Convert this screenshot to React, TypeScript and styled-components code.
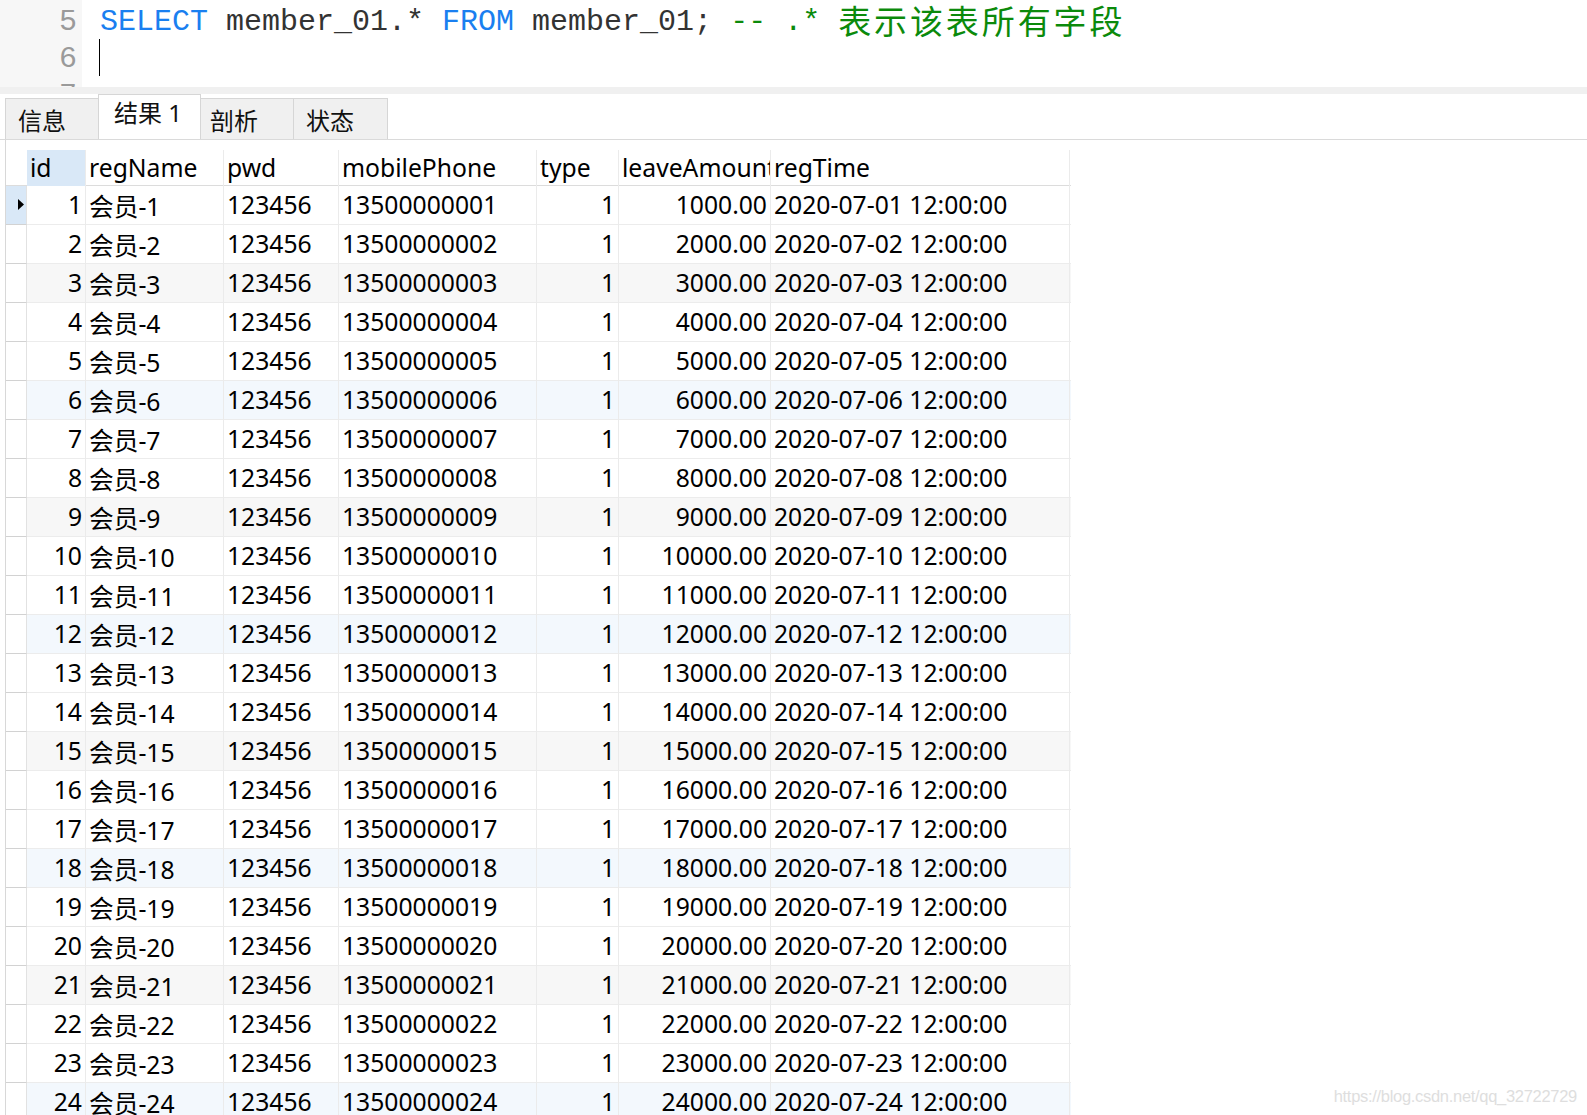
import React from "react";
import styled, { createGlobalStyle } from "styled-components";

const Global = createGlobalStyle`
  html, body { margin: 0; padding: 0; background: #ffffff; }
  body { font-family: "Noto Sans", "Noto Sans CJK SC", sans-serif; }
`;

const Page = styled.div`
  position: relative;
  width: 1587px;
  height: 1115px;
  overflow: hidden;
  background: #ffffff;
  display: flex;
  flex-direction: column;
`;

const Editor = styled.div`
  display: flex;
  height: 87px;
  overflow: hidden;
  flex-shrink: 0;
`;

const Gutter = styled.div`
  width: 82px;
  background: #f7f7f7;
  padding-top: 4px;
  padding-right: 5px;
  box-sizing: border-box;
  font-family: "Liberation Mono", monospace;
  font-size: 30px;
  color: #9a9a9a;
  text-align: right;
  overflow: hidden;
`;

const LineNo = styled.div`
  height: 37px;
  line-height: 37px;
`;

const Code = styled.div`
  flex: 1;
  padding-top: 4px;
  padding-left: 18px;
  font-family: "Liberation Mono", monospace;
  font-size: 30px;
  color: #333333;
  white-space: pre;
`;

const CodeLine = styled.div`
  height: 37px;
  line-height: 37px;
  display: flex;
  align-items: center;
`;

const Kw = styled.span`
  color: #1a7ff0;
`;

const Comment = styled.span`
  color: #0b8a0b;
`;

const CjkComment = styled.span`
  color: #0b8a0b;
  font-family: "Noto Sans CJK SC", sans-serif;
  font-size: 33px;
  line-height: 37px;
  letter-spacing: 2.9px;
  margin-top: -5px;
`;

const Caret = styled.span`
  display: inline-block;
  width: 0;
  height: 37px;
  border-left: 1px solid #000000;
  margin-left: -1px;
  margin-top: -4px;
`;

const Splitter = styled.div`
  height: 7px;
  background: #f0f0f0;
  flex-shrink: 0;
`;

const TabBar = styled.div`
  display: flex;
  align-items: flex-end;
  height: 46px;
  box-sizing: border-box;
  padding-left: 5px;
  border-bottom: 1px solid #dadada;
  flex-shrink: 0;
`;

const Tab = styled.div<{ $active?: boolean; $w: number; $pl: number }>`
  box-sizing: border-box;
  width: ${(p) => p.$w}px;
  height: ${(p) => (p.$active ? 45 : 41)}px;
  padding-left: ${(p) => p.$pl}px;
  padding-top: ${(p) => (p.$active ? 2 : 6)}px;
  background: ${(p) => (p.$active ? "#ffffff" : "#f0f0f0")};
  border: 1px solid #d6d6d6;
  border-bottom: none;
  margin-left: -1px;
  font-size: 24px;
  line-height: 32px;
  color: #111111;
  white-space: pre;
  &:first-child { margin-left: 0; }
`;

const Panel = styled.div`
  flex: 1;
  margin-left: 5px;
  border-left: 1px solid #d8d8d8;
  padding-top: 10px;
`;

const Grid = styled.div`
  width: 1065px;
  font-size: 24.7px;
  color: #000000;
`;

const cols = [21, 59, 138, 115, 198, 82, 152, 299];

const Row = styled.div<{ $bg?: string; $h: number; $line: string }>`
  display: grid;
  grid-template-columns: ${cols.map((c) => c + "px").join(" ")};
  height: ${(p) => p.$h}px;
  background: ${(p) => p.$bg || "#ffffff"};
  box-sizing: border-box;
  border-bottom: 1px solid ${(p) => p.$line};
`;

const Cell = styled.div<{ $right?: boolean; $bg?: string }>`
  box-sizing: border-box;
  border-right: 1px solid #ebebeb;
  padding: 0 ${(p) => (p.$right ? 3 : 0)}px 0 ${(p) => (p.$right ? 0 : 3)}px;
  white-space: nowrap;
  overflow: hidden;
  display: flex;
  align-items: center;
  justify-content: ${(p) => (p.$right ? "flex-end" : "flex-start")};
  background: ${(p) => p.$bg || "transparent"};
  margin-bottom: -1px;
  padding-bottom: 2px;
`;

const Indicator = styled.div<{ $sel?: boolean }>`
  box-sizing: border-box;
  border-right: 1px solid #e2e2e2;
  border-bottom: 1px solid #d2d2d2;
  margin-bottom: -1px;
  background: ${(p) => (p.$sel ? "#d9e8f7" : "#ffffff")};
  display: flex;
  align-items: center;
  padding-left: 12px;
  padding-bottom: 2px;
`;

const HeaderIndicator = styled.div`
  background: #ffffff;
`;

const Watermark = styled.div`
  position: absolute;
  right: 10px;
  bottom: 9px;
  font-family: "Liberation Sans", Arial, sans-serif;
  font-size: 16.5px;
  color: #dedede;
  letter-spacing: -0.3px;
`;

const headers = ["id", "regName", "pwd", "mobilePhone", "type", "leaveAmount", "regTime"];

const rows = Array.from({ length: 24 }, (_, i) => {
  const n = i + 1;
  const dd = String(n).padStart(2, "0");
  return {
    id: String(n),
    name: "会员-" + n,
    pwd: "123456",
    phone: "135000000" + dd,
    type: "1",
    amount: n * 1000 + ".00",
    time: "2020-07-" + dd + " 12:00:00",
  };
});

function rowBg(n: number) {
  if (n % 6 === 3) return "#f7f7f7";
  if (n % 6 === 0) return "#f3f8fd";
  return "#ffffff";
}

export default function App() {
  return (
    <Page>
      <Global />
      <Editor>
        <Gutter>
          <LineNo>5</LineNo>
          <LineNo>6</LineNo>
          <LineNo>7</LineNo>
        </Gutter>
        <Code>
          <CodeLine>
            <Kw>SELECT</Kw>
            {" member_01.* "}
            <Kw>FROM</Kw>
            {" member_01; "}
            <Comment>{"-- .* "}</Comment>
            <CjkComment>表示该表所有字段</CjkComment>
          </CodeLine>
          <CodeLine>
            <Caret />
          </CodeLine>
        </Code>
      </Editor>
      <Splitter />
      <TabBar>
        <Tab $w={94} $pl={12}>信息</Tab>
        <Tab $w={103} $pl={15} $active>
          结果 1
        </Tab>
        <Tab $w={94} $pl={9}>剖析</Tab>
        <Tab $w={95} $pl={12}>状态</Tab>
      </TabBar>
      <Panel>
        <Grid>
          <Row $h={36} $line="#dcdcdc">
            <HeaderIndicator />
            {headers.map((h, i) => (
              <Cell key={h} $bg={i === 0 ? "#d9e8f7" : undefined}>
                {h}
              </Cell>
            ))}
          </Row>
          {rows.map((r, i) => (
            <Row key={r.id} $h={39} $bg={rowBg(i + 1)} $line="#ececec">
              <Indicator $sel={i === 0}>
                {i === 0 && (
                  <svg width="6" height="11" viewBox="0 0 6 11">
                    <path d="M0 0 L6 5.5 L0 11 Z" fill="#000" />
                  </svg>
                )}
              </Indicator>
              <Cell $right>{r.id}</Cell>
              <Cell>{r.name}</Cell>
              <Cell>{r.pwd}</Cell>
              <Cell>{r.phone}</Cell>
              <Cell $right>{r.type}</Cell>
              <Cell $right>{r.amount}</Cell>
              <Cell>{r.time}</Cell>
            </Row>
          ))}
        </Grid>
      </Panel>
      <Watermark>https://blog.csdn.net/qq_32722729</Watermark>
    </Page>
  );
}
